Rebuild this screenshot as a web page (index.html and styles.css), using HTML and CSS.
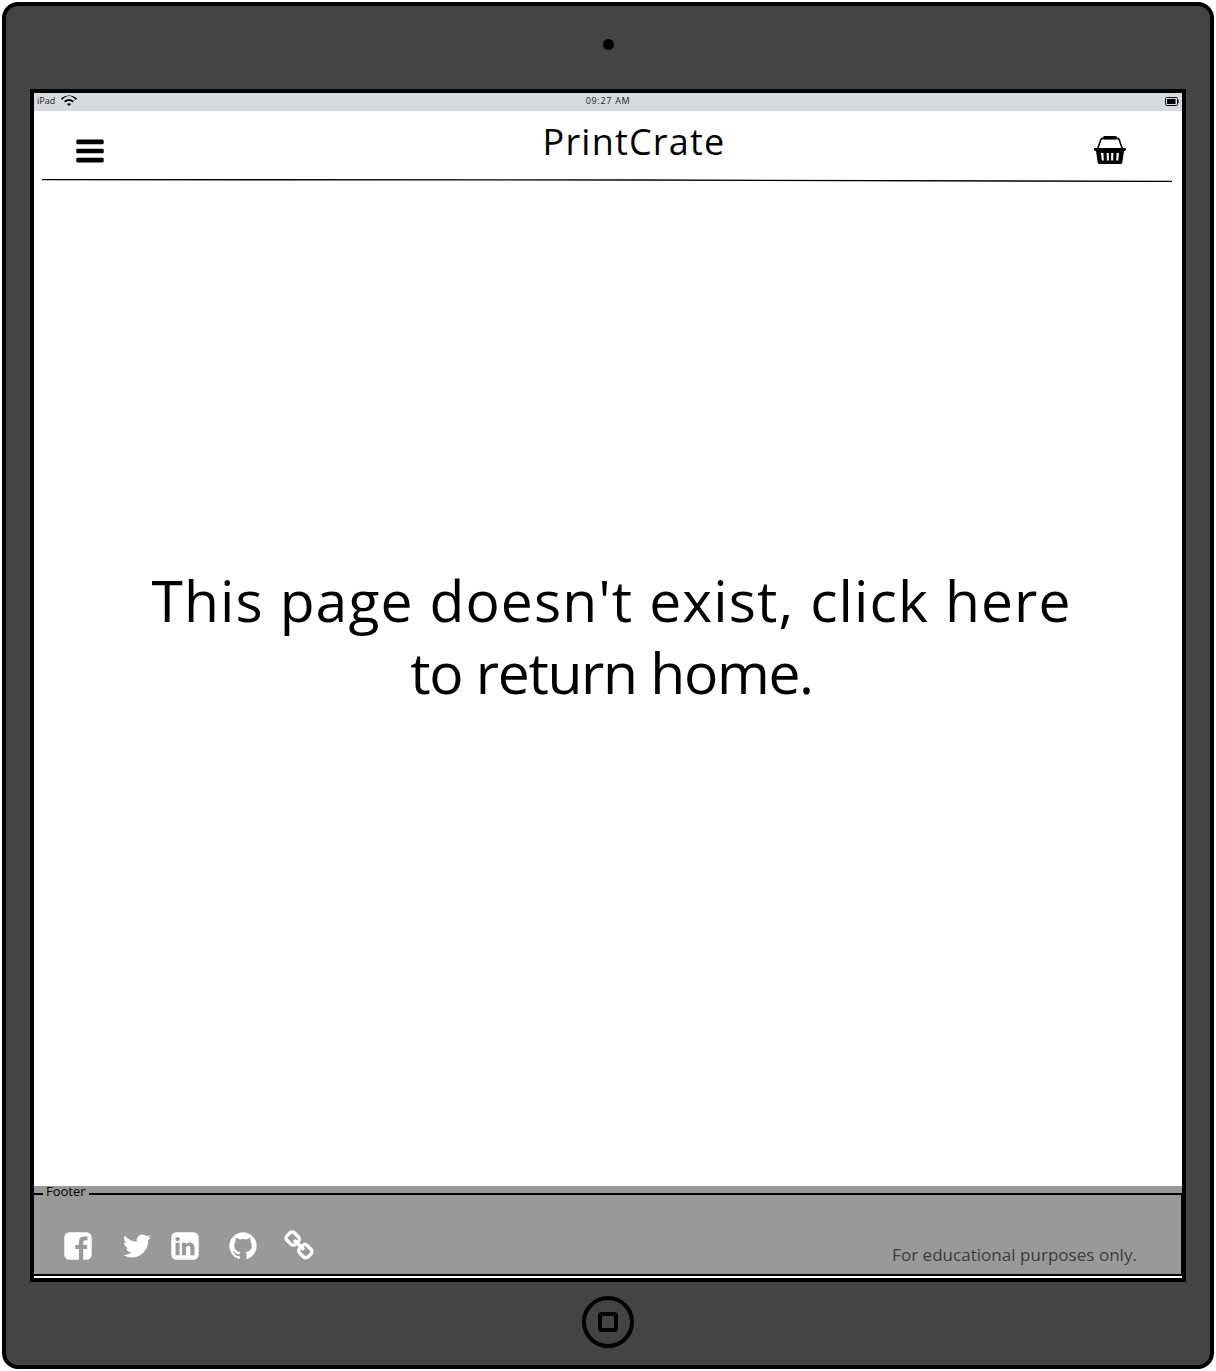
FILE: index.html
```html
<!DOCTYPE html>
<html>
    <head>
        <title>PrintCrate</title>
        <link rel="stylesheet" href="styles.css">
    </head>
    <body>
        <div class="device">
            <div class="bezel-top"><span class="camera"></span></div>
            <div class="screen">
                <div class="status">
                    <div class="status-left">
                        <span>iPad</span>
                        <svg class="wifi" viewBox="0 0 16 11"><path d="M0 3.6C4.4-.6 11.6-.6 16 3.6l-1.3 1.4C11-.4 5-.4 1.3 5z"/><path d="M3 6.2c2.9-2.6 7.1-2.6 10 0l-1.3 1.4c-2.2-2-5.2-2-7.4 0z"/><path d="M5.9 8.9c1.2-1 3-1 4.2 0L8 11z"/></svg>
                    </div>
                    <span class="clock">09:27 AM</span>
                    <svg class="battery" viewBox="0 0 14 9"><rect x=".5" y=".5" width="12" height="8" rx="1.2" fill="none" stroke="#111"/><rect x="2" y="2" width="8.500" height="5"/><path d="M13 3c1 .8 1 2.200 0 3z" fill="none" stroke="#111" stroke-width=".8"/></svg>
                </div>
                <header class="top">
                    <svg class="menu-icon" viewBox="0 0 1792 1792"><path d="M1664 1344v128q0 26-19 45t-45 19h-1408q-26 0-45-19t-19-45v-128q0-26 19-45t45-19h1408q26 0 45 19t19 45zm0-512v128q0 26-19 45t-45 19h-1408q-26 0-45-19t-19-45v-128q0-26 19-45t45-19h1408q26 0 45 19t19 45zm0-512v128q0 26-19 45t-45 19h-1408q-26 0-45-19t-19-45v-128q0-26 19-45t45-19h1408q26 0 45 19t19 45z"/></svg>
                    <h1 class="brand">PrintCrate</h1>
                    <svg class="basket" viewBox="0 0 32 28"><path d="M3.6 13 6.6 4.200Q7.200 2.400 9 2.400h14q1.800 0 2.400 1.800L28.400 13" fill="none" stroke="#000" stroke-width="1.600"/><rect x="9" y="0" width="14" height="3.600" rx="1.600"/><path fill-rule="evenodd" d="M1 12h30q1 0 1 1.200t-1 1.800h-1l-1.700 11.400q-.2 1.600-1.800 1.600H5.500q-1.600 0-1.800-1.600L2 15H1q-1 0-1-1.800T1 12zM7 17l.8 7.600h2L9.400 17zM12.600 17l.3 7.600h2l-.1-7.600zM17.200 17l-.1 7.600h2l.3-7.600zM22.600 17l-.4 7.600h2L25 17z"/></svg>
                </header>
                <svg class="rule" viewBox="0 0 1130 3" preserveAspectRatio="none"><path d="M0 .6 600 1 1130 2.400" fill="none" stroke="#000" stroke-width="1.300"/></svg>
                <main class="content">
                    <p class="message"><span class="line-wide">This page doesn't exist, click here</span><br><span class="line-tight">to return home.</span></p>
                </main>
                <footer class="footer">
                    <fieldset class="footer-box">
                        <legend>Footer</legend>
                        <div class="social">
                            <svg viewBox="0 0 1792 1792"><path d="M1376 128q119 0 203.500 84.500t84.500 203.500v960q0 119-84.500 203.500t-203.500 84.500h-188v-595h199l30-232h-229v-148q0-56 23.500-84t91.500-28l122-1v-207q-63-9-178-9-136 0-217.500 80t-81.500 226v171h-200v232h200v595h-532q-119 0-203.500-84.500t-84.500-203.500v-960q0-119 84.500-203.500t203.500-84.500h960z"/></svg>
                            <svg class="twitter" viewBox="0 0 1792 1792"><path d="M1684 408q-67 98-162 167 1 14 1 42 0 130-38 259.500t-115.500 248.500-184.500 210.500-258 146-323 54.500q-271 0-496-145 35 4 78 4 225 0 401-138-105-2-188-64.500t-114-159.500q33 5 61 5 43 0 85-11-112-23-185.500-111.500t-73.500-205.500v-4q68 38 146 41-66-44-105-115t-39-154q0-88 44-163 121 149 294.500 238.500t371.500 99.500q-8-38-8-74 0-134 94.500-228.500t228.500-94.500q140 0 236 102 109-21 205-78-37 115-142 178 92-10 184-50z"/></svg>
                            <svg class="linkedin" viewBox="0 0 1792 1792"><path d="M365 1414h231v-694h-231v694zm246-908q-1-52-36-86t-93-34-94.500 34-36.500 86q0 51 35.500 85.500t92.500 34.500h1q59 0 95-34.500t36-85.500zm585 908h231v-398q0-154-73-233t-193-79q-136 0-209 117h2v-101h-231q3 66 0 694h231v-388q0-38 7-56 15-35 45-59.500t74-24.500q116 0 116 157v371zm468-998v960q0 119-84.500 203.500t-203.500 84.500h-960q-119 0-203.500-84.500t-84.500-203.500v-960q0-119 84.500-203.500t203.500-84.500h960q119 0 203.500 84.500t84.500 203.500z"/></svg>
                            <svg class="github" viewBox="0 0 1792 1792"><path d="M896 128q209 0 385.500 103t279.500 279.500 103 385.500q0 251-146.500 451.500t-378.500 277.500q-27 5-40-7t-13-30q0-3 .5-76.500t.5-134.500q0-97-52-142 57-6 102.500-18t94-39 81-66.500 53-105 20.500-150.500q0-119-79-206 37-91-8-204-28-9-81 11t-92 44l-38 24q-93-26-192-26t-192 26q-16-11-42.500-27t-83.500-38.500-85-13.500q-45 113-8 204-79 87-79 206 0 85 20.500 150t52.500 105 80.500 67 94 39 102.500 18q-39 36-49 103-21 10-45 15t-57 5-65.500-21.500-55.500-62.500q-19-32-48.500-52t-49.500-24l-20-3q-21 0-29 4.500t-5 11.500 9 14 13 12l7 5q22 10 43.500 38t31.500 51l10 23q13 38 44 61.500t67 30 69.500 7 55.500-3.500l23-4q0 38 .5 88.500t.5 54.500q0 18-13 30t-40 7q-232-77-378.500-277.500t-146.500-451.500q0-209 103-385.500t279.500-279.500 385.500-103z"/></svg>
                            <svg class="chain" viewBox="0 0 1792 1792"><path d="M1520 1216q0-40-28-68l-208-208q-28-28-68-28-42 0-72 32 3 3 19 18.500t21.500 21.500 15 19 13 25.500 3.500 27.500q0 40-28 68t-68 28q-15 0-27.500-3.500t-25.500-13-19-15-21.500-21.500-18.500-19q-33 31-33 73 0 40 28 68l206 207q27 27 68 27 40 0 68-26l147-146q28-28 28-67zm-703-705q0-40-28-68l-206-207q-28-28-68-28-39 0-68 27l-147 146q-28 28-28 67 0 40 28 68l208 208q27 27 68 27 42 0 72-31-3-3-19-18.500t-21.500-21.500-15-19-13-25.500-3.500-27.500q0-40 28-68t68-28q15 0 27.500 3.500t25.500 13 19 15 21.500 21.500 18.500 19q33-31 33-73zm895 705q0 120-85 203l-147 146q-83 83-203 83-121 0-204-85l-206-207q-83-83-83-203 0-123 88-209l-88-88q-86 88-208 88-120 0-204-84l-208-208q-84-84-84-204t85-203l147-146q83-83 203-83 121 0 204 85l206 207q83 83 83 203 0 123-88 209l88 88q86-88 208-88 120 0 204 84l208 208q84 84 84 204z"/></svg>
                        </div>
                        <span class="note">For educational purposes only.</span>
                    </fieldset>
                </footer>
            </div>
            <div class="bezel-bottom">
                <span class="home"><span class="home-inner"></span></span>
            </div>
        </div>
    </body>
</html>
```

FILE: styles.css
```css
html, body {
    margin: 0;
    background-color: white;
}
body {
    font-family: "Open Sans", Lato, sans-serif;
    color: black;
}
.device {
    box-sizing: border-box;
    width: 1212px;
    height: 1367px;
    margin: 2px 0 0 2px;
    border: 4px solid black;
    border-radius: 16px;
    background-color: rgb(68, 68, 68);
    display: flex;
    flex-direction: column;
    padding: 0 24px;
}
.bezel-top {
    height: 83px;
    flex: none;
    display: flex;
    align-items: center;
    justify-content: center;
    padding-bottom: 7px;
    box-sizing: border-box;
}
.camera {
    width: 11px;
    height: 11px;
    border-radius: 50%;
    background-color: black;
}
.bezel-bottom {
    box-sizing: border-box;
    height: 83px;
    flex: none;
    display: flex;
    align-items: center;
    justify-content: center;
    padding-bottom: 3px;
}
.home {
    box-sizing: border-box;
    width: 52px;
    height: 52px;
    border: 4px solid black;
    border-radius: 50%;
    display: flex;
    align-items: center;
    justify-content: center;
}
.home-inner {
    box-sizing: border-box;
    width: 20px;
    height: 20px;
    border: 4px solid black;
    border-radius: 4px;
}
.screen {
    flex: 1;
    border: 4px solid black;
    background-color: white;
    display: flex;
    flex-direction: column;
    min-height: 0;
}
.status {
    box-sizing: border-box;
    height: 18px;
    flex: none;
    background-color: rgb(213, 219, 222);
    display: flex;
    align-items: center;
    justify-content: space-between;
    padding: 0 3px 3px;
    font-size: 9px;
    color: #222;
}
.status-left {
    display: flex;
    align-items: center;
    gap: 6px;
    width: 60px;
}
.wifi {
    width: 16px;
    height: 11px;
}
.clock {
    letter-spacing: 0.7px;
}
.battery {
    width: 14px;
    height: 9px;
    margin: 2px 0 0 46px;
}
.top {
    box-sizing: border-box;
    height: 68px;
    flex: none;
    display: flex;
    align-items: center;
    justify-content: space-between;
    padding: 10px 56px 0 40px;
}
.menu-icon {
    width: 32px;
    height: 32px;
    margin-top: 2px;
}
.brand {
    margin: 0 0 16px 68px;
    font-size: 36px;
    font-weight: 500;
    line-height: 44px;
    letter-spacing: 1.2px;
}
.basket {
    width: 32px;
    height: 28px;
}
.rule {
    display: block;
    width: 1130px;
    height: 3px;
    margin-left: 8px;
    flex: none;
}
.content {
    flex: 1;
    display: flex;
    align-items: center;
    justify-content: center;
    padding: 0 0 96px 7px;
}
.message {
    margin: 0;
    font-size: 57px;
    font-weight: 500;
    line-height: 72px;
    text-align: center;
}
.line-wide {
    letter-spacing: 1.1px;
}
.line-tight {
    letter-spacing: -1.3px;
}
.footer {
    flex: none;
    height: 90px;
    margin-bottom: 2px;
    background-color: rgb(153, 153, 153);
}
.footer-box {
    box-sizing: border-box;
    height: 90px;
    margin: 0;
    padding: 0 44px 9px 28px;
    border: 2px solid black;
    border-width: 2px 1px 2px 0;
    border-radius: 0;
    display: flex;
    align-items: flex-end;
    justify-content: space-between;
}
.footer-box legend {
    margin-left: -19px;
    padding: 0 3px;
    font-size: 13px;
    line-height: 15px;
    transform: translateY(-2px);
}
.social {
    display: flex;
    height: 32px;
    margin-bottom: 3px;
}
.social svg {
    width: 32px;
    height: 32px;
    fill: white;
}
.social .twitter {
    margin-left: 27px;
}
.social .linkedin {
    margin-left: 16px;
}
.social .github {
    margin-left: 26px;
}
.social .chain {
    margin-left: 24px;
}
.note {
    font-size: 17px;
    line-height: 20px;
    letter-spacing: 0.03px;
    color: rgb(60, 60, 60);
}
```
